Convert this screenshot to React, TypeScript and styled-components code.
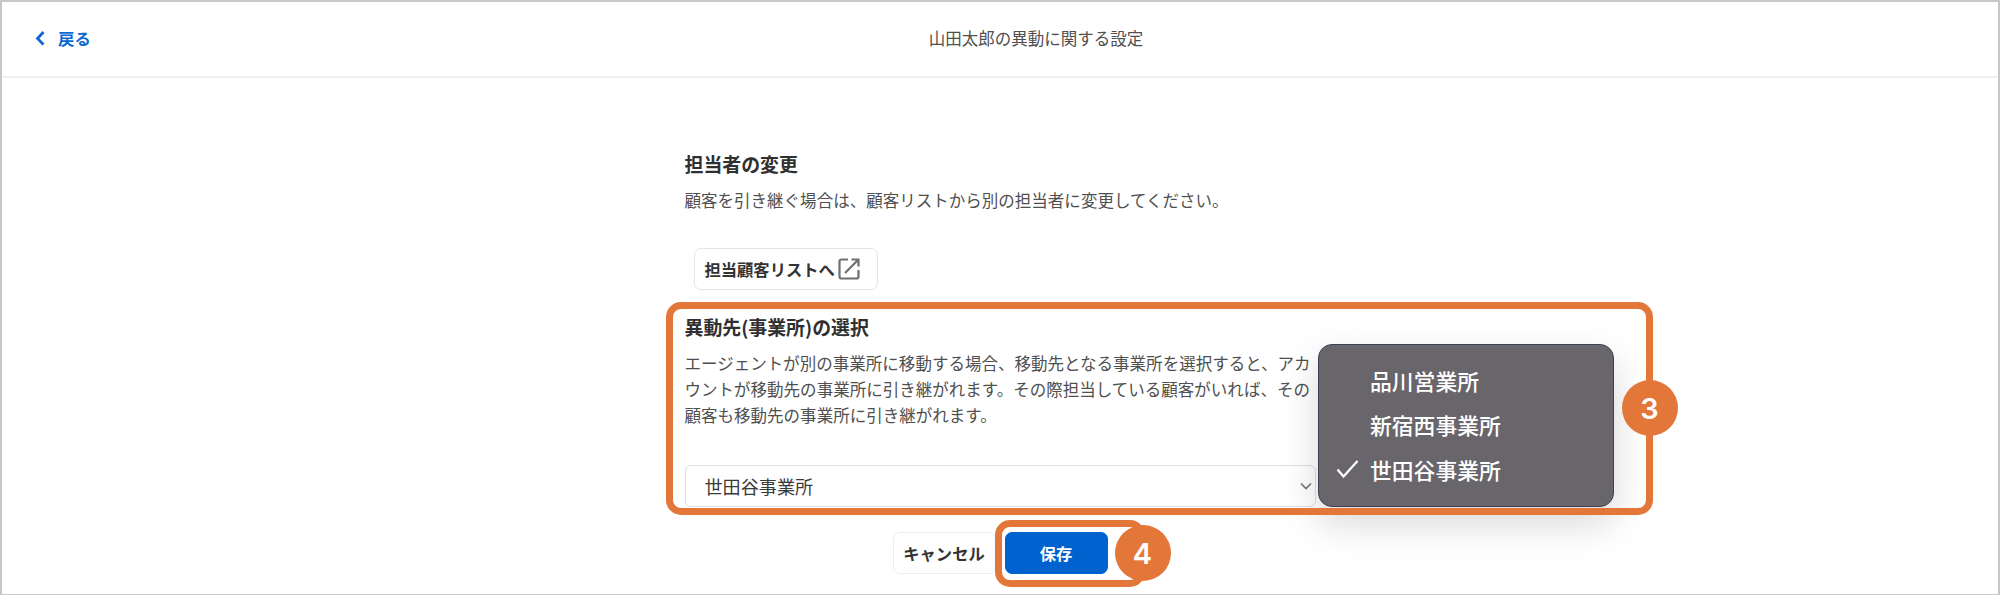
import React from "react";
import styled, { createGlobalStyle } from "styled-components";

const ORANGE = "#e27739";

const GlobalStyle = createGlobalStyle`
  * { box-sizing: border-box; }
  body {
    margin: 0;
    background: #fff;
    color: #4f4f4f;
    font-family: "Noto Sans CJK JP", sans-serif;
    font-size: 16.53px;
  }
  h1, h2, p { margin: 0; }
  button { font-family: inherit; }
`;

const Page = styled.div`
  width: 2000px;
  height: 595px;
  overflow: hidden;
  border: 2px solid #c8c8c8;
  border-bottom-width: 1px;
  background: #fff;
`;

const Header = styled.header`
  height: 76px;
  display: flex;
  align-items: center;
  padding: 0 17px 2px 33px;
  border-bottom: 2px solid #efefef;
`;

const BackLink = styled.a`
  display: flex;
  align-items: center;
  gap: 13px;
  color: #0b69d4;
  font-size: 16.4px;
  font-weight: 700;
  line-height: 24px;
`;

const Title = styled.h1`
  flex: 1;
  text-align: center;
  font-size: 16.5px;
  font-weight: 400;
  line-height: 24px;
`;

const Content = styled.main`
  width: 631px;
  margin: 0 auto;
  padding-top: 72px;
`;

const Heading = styled.h2`
  color: #303030;
  font-size: 18.9px;
  font-weight: 700;
  line-height: 28px;
  white-space: nowrap;
`;

const Description = styled.p<{ $gap: number }>`
  margin-top: ${(p) => p.$gap}px;
  line-height: 26px;
  white-space: nowrap;
`;

const Button = styled.button<{ $primary?: boolean; $width: number }>`
  display: flex;
  align-items: center;
  justify-content: center;
  width: ${(p) => p.$width}px;
  height: 42px;
  padding: 0 0 1px;
  border: 1.5px solid ${(p) => (p.$primary ? "#0062cf" : "#e9edf1")};
  border-radius: 7px;
  background: ${(p) => (p.$primary ? "#0062cf" : "#fff")};
  color: ${(p) => (p.$primary ? "#fff" : "#333")};
  font-size: 16.3px;
  font-weight: 700;
  white-space: nowrap;
`;

const ListButton = styled(Button)`
  justify-content: flex-start;
  gap: 2px;
  padding-left: 10px;
  border-color: #e2e6eb;
`;

const ListLink = styled.div`
  margin: 35px 0 0 9px;
`;

const OfficeSection = styled.section`
  position: relative;
  margin-top: 23px;
`;

const Select = styled.div`
  display: flex;
  align-items: center;
  justify-content: space-between;
  height: 42px;
  margin-top: 37px;
  padding: 0 3px 1px 19px;
  border: 1.5px solid #dce1e6;
  border-radius: 6px;
  color: #3a3a3a;
  font-size: 18.1px;
`;

const Menu = styled.ul`
  position: absolute;
  top: 31px;
  left: 633.5px;
  width: 296px;
  height: 163px;
  margin: 0;
  padding: 13px 0 0 17px;
  list-style: none;
  border: 1.5px solid #3a424f;
  border-radius: 14px;
  background: #69666b;
  box-shadow: 0 16px 38px rgba(0, 0, 0, 0.16);
`;

const MenuItem = styled.li`
  display: grid;
  grid-template-columns: 34px auto;
  align-items: center;
  height: 44.5px;
  color: #fff;
  font-size: 21.8px;
  font-weight: 500;
`;

const MenuLabel = styled.span`
  grid-column: 2;
`;

const Actions = styled.div`
  display: flex;
  gap: 9px;
  margin: 25px 0 0 208px;
`;

const SaveSlot = styled.div`
  position: relative;
`;

const Marker = styled.div<{ $top: number; $left: number; $width: number; $height: number }>`
  position: absolute;
  top: ${(p) => p.$top}px;
  left: ${(p) => p.$left}px;
  width: ${(p) => p.$width}px;
  height: ${(p) => p.$height}px;
  border: 7.5px solid ${ORANGE};
  border-radius: 15px;
  pointer-events: none;
`;

const StepBadge = styled.span<{ $top: number; $left: number }>`
  position: absolute;
  top: ${(p) => p.$top}px;
  left: ${(p) => p.$left}px;
  display: flex;
  align-items: center;
  justify-content: center;
  width: 56px;
  height: 56px;
  border-radius: 50%;
  background: ${ORANGE};
  color: #fff;
  font-family: Inter, sans-serif;
  font-size: 29px;
  font-weight: 600;
  line-height: 1;
`;

const BackIcon = () => (
  <svg width="10" height="16" viewBox="0 0 10 16" fill="none" stroke="currentColor" strokeWidth="2.8">
    <path d="M8.500 2 2.500 8.500l6 6" />
  </svg>
);

const ExternalIcon = () => (
  <svg width="24" height="24" viewBox="0 0 24 24" fill="none" stroke="#6f6f6f" strokeWidth="2.2">
    <path d="M11 2.500H4.500a2 2 0 0 0-2 2v15a2 2 0 0 0 2 2h15a2 2 0 0 0 2-2V13" />
    <path d="M14.500 2.500h7v7M21 3 8 16" />
  </svg>
);

const ChevronIcon = () => (
  <svg width="12" height="8" viewBox="0 0 12 8" fill="none" stroke="#777" strokeWidth="1.7">
    <path d="m1 1.500 5 5 5-5" />
  </svg>
);

const CheckIcon = () => (
  <svg width="24" height="20" viewBox="0 0 24 20" fill="none" stroke="#fff" strokeWidth="2.200">
    <path d="m1.500 10.500 6 7L21.500 2" />
  </svg>
);

const offices = ["品川営業所", "新宿西事業所", "世田谷事業所"];
const selected = "世田谷事業所";

export default function App() {
  return (
    <Page>
      <GlobalStyle />
      <Header>
        <BackLink>
          <BackIcon />
          戻る
        </BackLink>
        <Title>山田太郎の異動に関する設定</Title>
      </Header>
      <Content>
        <section>
          <Heading>担当者の変更</Heading>
          <Description $gap={9}>顧客を引き継ぐ場合は、顧客リストから別の担当者に変更してください。</Description>
          <ListLink>
            <ListButton $width={184}>
              担当顧客リストへ
              <ExternalIcon />
            </ListButton>
          </ListLink>
        </section>
        <OfficeSection>
          <Heading>異動先(事業所)の選択</Heading>
          <Description $gap={9}>
            エージェントが別の事業所に移動する場合、移動先となる事業所を選択すると、アカ
            <br />
            ウントが移動先の事業所に引き継がれます。その際担当している顧客がいれば、その
            <br />
            顧客も移動先の事業所に引き継がれます。
          </Description>
          <Select>
            {selected}
            <ChevronIcon />
          </Select>
          <Menu>
            {offices.map((office) => (
              <MenuItem key={office}>
                {office === selected && <CheckIcon />}
                <MenuLabel>{office}</MenuLabel>
              </MenuItem>
            ))}
          </Menu>
          <Marker $top={-11.5} $left={-19} $width={987} $height={213} />
          <StepBadge $top={67} $left={937}>3</StepBadge>
        </OfficeSection>
        <Actions>
          <Button $width={103}>キャンセル</Button>
          <SaveSlot>
            <Button $primary $width={103}>保存</Button>
            <Marker $top={-12} $left={-10} $width={150} $height={67} />
            <StepBadge $top={-7} $left={110}>4</StepBadge>
          </SaveSlot>
        </Actions>
      </Content>
    </Page>
  );
}
